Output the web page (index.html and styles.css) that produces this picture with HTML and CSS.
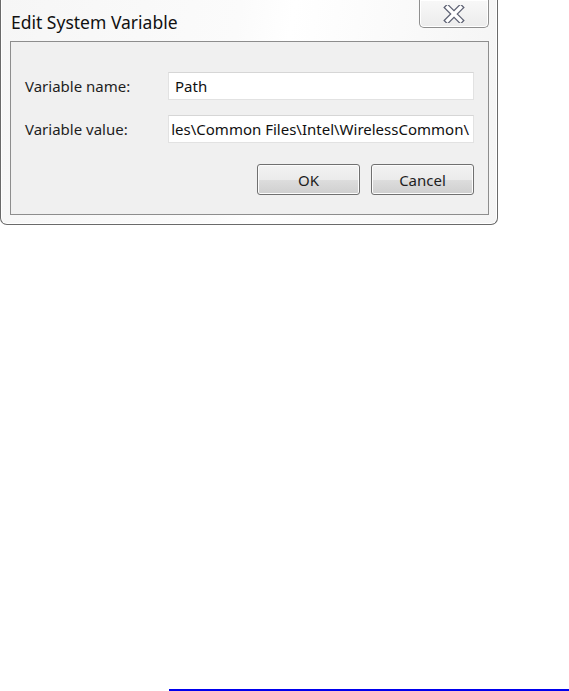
FILE: index.html
```html
<!DOCTYPE html>
<html lang="en">

<head>
    <meta charset="UTF-8">
    <title>Edit System Variable</title>
    <link rel="stylesheet" href="styles.css">
</head>

<body>
    <div class="window">
        <div class="titlebar">
            <h3 class="title">Edit System Variable</h3>
            <div class="close">
                <svg width="22" height="18" viewBox="0 0 22 18">
                    <path d="M4.5 2.5 L17.5 15.5 M17.5 2.5 L4.5 15.5" stroke="#5d6173" stroke-width="6" stroke-linecap="square" fill="none"/>
                    <path d="M4.5 2.5 L17.5 15.5 M17.5 2.5 L4.5 15.5" stroke="#ffffff" stroke-width="3.4" stroke-linecap="square" fill="none"/>
                </svg>
            </div>
        </div>
        <div class="panel">
            <div class="fields">
                <label class="label">Variable name:</label>
                <div class="field"><span>Path</span></div>
                <label class="label">Variable value:</label>
                <div class="field field-end"><span>les\Common Files\Intel\WirelessCommon\</span></div>
            </div>
            <div class="buttons">
                <button class="btn">OK</button>
                <button class="btn">Cancel</button>
            </div>
        </div>
    </div>
    <a class="link" href="#"></a>
</body>

</html>
```

FILE: styles.css
```css
html,
body {
    margin: 0;
    padding: 0;
    background: #fff;
}

body {
    font-family: "Noto Sans", "Open Sans", sans-serif;
    color: #1e1e1e;
}

h3 {
    margin: 0;
    padding: 0;
}

.window {
    width: 498px;
    height: 225px;
    box-sizing: border-box;
    border: 1px solid #6a6a6a;
    border-top: none;
    border-radius: 0 0 7px 7px;
    background: linear-gradient(100deg, #f6f6f6 0%, #fbfbfb 45%, #ffffff 55%, #f4f4f4 100%);
    -webkit-box-shadow: inset 1px 0 0 #fff, inset -1px 0 0 #fff, inset 0 -1px 0 #fff;
    box-shadow: inset 1px 0 0 #fff, inset -1px 0 0 #fff, inset 0 -1px 0 #fff;
}

.titlebar {
    height: 41px;
    display: flex;
    justify-content: space-between;
    align-items: flex-start;
}

.title {
    font-weight: normal;
    font-size: 17.5px;
    line-height: 24px;
    padding: 10px 0 0 10px;
    color: #111;
}

.close {
    width: 70px;
    height: 28px;
    margin-right: 8px;
    box-sizing: border-box;
    border: 1px solid #8f8f8f;
    border-top: none;
    border-radius: 0 0 5px 5px;
    background: linear-gradient(#f8f8f8, #ececec);
    -webkit-box-shadow: inset 0 0 0 1px #fff;
    box-shadow: inset 0 0 0 1px #fff;
    display: flex;
    align-items: center;
    justify-content: center;
}

.close svg {
    display: block;
    margin-top: 1px;
}

.panel {
    margin: 0 8px 0 9px;
    height: 174px;
    box-sizing: border-box;
    border: 1px solid #8d8d8d;
    background: #f0f0f0;
    padding: 30px 14px 0 14px;
    display: flex;
    flex-direction: column;
}

.fields {
    display: grid;
    grid-template-columns: 143px 1fr;
    row-gap: 15px;
    align-items: center;
}

.label {
    font-size: 15px;
    color: #1e1e1e;
}

.field {
    height: 28px;
    box-sizing: border-box;
    background: #fff;
    border: 1px solid #e2e2e2;
    border-top-color: #d6d6d6;
    padding: 0 5px 0 6px;
    display: flex;
    align-items: center;
    overflow: hidden;
    white-space: nowrap;
    font-size: 15px;
    color: #101010;
}

.field-end {
    justify-content: flex-end;
    padding-right: 4px;
}

.buttons {
    display: flex;
    justify-content: flex-end;
    gap: 11px;
    margin-top: 21px;
}

.btn {
    width: 103px;
    height: 31px;
    border: 1px solid #707070;
    border-radius: 3px;
    background: linear-gradient(#f2f2f2 0%, #ebebeb 50%, #dddddd 51%, #cfcfcf 100%);
    -webkit-box-shadow: inset 0 0 0 1px #fcfcfc;
    box-shadow: inset 0 0 0 1px #fcfcfc;
    font-family: "Noto Sans", "Open Sans", sans-serif;
    font-size: 15px;
    color: #1e1e1e;
    padding: 0;
}

.link {
    display: block;
    width: 400px;
    height: 2px;
    margin: 464px 0 0 169px;
    background: #0000ee;
}
```
